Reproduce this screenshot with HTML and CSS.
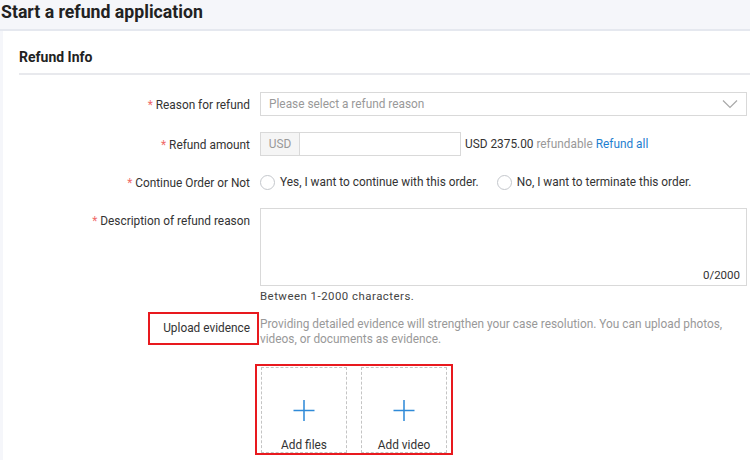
FILE: index.html
```html
<!DOCTYPE html>
<html lang="en">
<head>
    <meta charset="UTF-8">
    <meta name="viewport" content="width=device-width, initial-scale=1.0">
    <title>Start a refund application</title>
    <link rel="stylesheet" href="styles.css">
</head>
<body>
    <div class="page-head">
        <h1>Start a refund application</h1>
    </div>
    <div class="card">
        <h2 class="card-title">Refund Info</h2>
        <div class="form">
            <div class="row">
                <div class="label"><span class="req">*</span> Reason for refund</div>
                <div class="control">
                    <div class="select">
                        <span class="placeholder">Please select a refund reason</span>
                        <svg class="chevron" width="16" height="10" viewBox="0 0 16 10">
                            <path d="M1 1.5 L8 8.5 L15 1.5" fill="none" stroke="#a8a8a8" stroke-width="1.2"/>
                        </svg>
                    </div>
                </div>
            </div>
            <div class="row">
                <div class="label"><span class="req">*</span> Refund amount</div>
                <div class="control amount">
                    <div class="input-group">
                        <span class="addon">USD</span>
                        <span class="input"></span>
                    </div>
                    <span class="refundable">USD 2375.00 <span class="muted">refundable</span> <a class="link">Refund all</a></span>
                </div>
            </div>
            <div class="row row-radio">
                <div class="label"><span class="req">*</span> Continue Order or Not</div>
                <div class="control radios">
                    <label class="radio"><span class="dot"></span>Yes, I want to continue with this order.</label>
                    <label class="radio"><span class="dot"></span>No, I want to terminate this order.</label>
                </div>
            </div>
            <div class="row row-desc">
                <div class="label"><span class="req">*</span> Description of refund reason</div>
                <div class="control">
                    <div class="textarea">
                        <span class="count">0/2000</span>
                    </div>
                    <div class="hint">Between 1-2000 characters.</div>
                </div>
            </div>
            <div class="row row-upload">
                <div class="label"><span class="marked">Upload evidence</span></div>
                <div class="control">
                    <p class="upload-note">Providing detailed evidence will strengthen your case resolution. You can upload photos, videos, or documents as evidence.</p>
                    <div class="upload-box">
                        <div class="tile">
                            <svg class="plus" width="22" height="22" viewBox="0 0 22 22">
                                <path d="M11 0 V22 M0 11 H22" stroke="#2f8ad8" stroke-width="1.6" fill="none"/>
                            </svg>
                            <span>Add files</span>
                        </div>
                        <div class="tile">
                            <svg class="plus" width="22" height="22" viewBox="0 0 22 22">
                                <path d="M11 0 V22 M0 11 H22" stroke="#2f8ad8" stroke-width="1.6" fill="none"/>
                            </svg>
                            <span>Add video</span>
                        </div>
                    </div>
                </div>
            </div>
        </div>
    </div>
</body>
</html>
```

FILE: styles.css
```css
body {
    margin: 0;
    background: #f5f6fa;
    font-family: Roboto, "Liberation Sans", Arial, sans-serif;
    color: #333;
    font-size: 11.85px;
}
.page-head {
    height: 29px;
    border-bottom: 2px solid #e5e8ef;
    padding-left: 1px;
}
.page-head h1 {
    margin: 0;
    font-size: 17.7px;
    line-height: 24px;
    font-weight: 700;
    color: #222;
}
.card {
    margin-left: 3px;
    background: #fff;
    height: 429px;
    overflow: hidden;
}
.card-title {
    margin: 0 0 0 16px;
    height: 42px;
    line-height: 52px;
    font-size: 14px;
    font-weight: 700;
    color: #222;
    border-bottom: 2px solid #e8e9ed;
}
.form {
    padding: 17px 3px 0 0;
}
.row {
    display: flex;
    margin-bottom: 16px;
}
.label {
    flex: none;
    width: 247px;
    margin-right: 10px;
    padding-top: 1px;
    height: 23px;
    text-align: right;
    line-height: 24px;
    color: #333;
}
.req {
    color: #f06a6a;
}
.control {
    flex: 1;
    min-width: 0;
}
.select {
    height: 22px;
    border: 1px solid #d9d9d9;
    display: flex;
    align-items: center;
    justify-content: space-between;
    padding: 0 8px 0 8px;
}
.placeholder {
    color: #999;
}
.amount {
    display: flex;
    align-items: center;
}
.input-group {
    display: flex;
    height: 24px;
    width: 201px;
    border: 1px solid #d9d9d9;
    box-sizing: border-box;
}
.addon {
    width: 38px;
    background: #f5f5f5;
    border-right: 1px solid #d9d9d9;
    color: #999;
    line-height: 22px;
    text-align: center;
}
.input {
    flex: 1;
}
.refundable {
    margin-left: 4px;
    color: #333;
}
.muted {
    color: #999;
}
.link {
    color: #1f80d0;
}
.row-radio {
    margin-top: -2px;
    margin-bottom: 14px;
}
.radios {
    display: flex;
    align-items: center;
    gap: 18px;
}
.radio {
    display: flex;
    align-items: center;
    gap: 5px;
}
.dot {
    width: 13px;
    height: 13px;
    border: 1px solid #c4c7cc;
    border-radius: 50%;
}
.row-desc {
    margin-bottom: 9px;
}
.textarea {
    position: relative;
    height: 76px;
    border: 1px solid #d9d9d9;
}
.count {
    position: absolute;
    right: 6px;
    bottom: 3px;
    font-size: 11.5px;
    color: #333;
}
.hint {
    margin-top: 3px;
    font-size: 11.4px;
    letter-spacing: 0.5px;
    line-height: 14px;
    color: #444;
}
.row-upload .label {
    line-height: normal;
    padding-top: 0;
    height: auto;
}
.marked {
    display: inline-block;
    border: 2px solid #e8191e;
    height: 29px;
    line-height: 29px;
    padding: 0 7px 0 13px;
    margin-right: -9px;
    color: #333;
}
.upload-note {
    margin: 5px 0 0;
    color: #999;
    line-height: 15px;
}
.upload-box {
    display: inline-flex;
    gap: 14px;
    margin: 17px 0 0 -5px;
    padding: 1px 4px 0 4px;
    border: 2px solid #e8191e;
}
.tile {
    width: 84px;
    height: 84px;
    border: 1px dashed #c4c4c4;
    display: flex;
    flex-direction: column;
    align-items: center;
    color: #333;
}
.plus {
    margin-top: 32px;
}
.tile span {
    margin-top: 17px;
}
```
